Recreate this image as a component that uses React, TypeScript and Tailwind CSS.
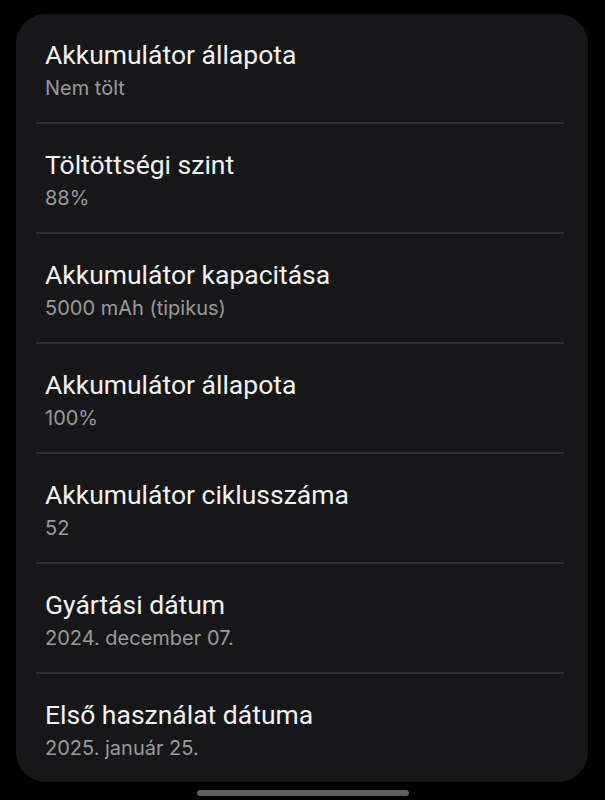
const rows = [
  { title: "Akkumulátor állapota", value: "Nem tölt" },
  { title: "Töltöttségi szint", value: "88%" },
  { title: "Akkumulátor kapacitása", value: "5000 mAh (tipikus)" },
  { title: "Akkumulátor állapota", value: "100%" },
  { title: "Akkumulátor ciklusszáma", value: "52" },
  { title: "Gyártási dátum", value: "2024. december 07." },
  { title: "Első használat dátuma", value: "2025. január 25." },
];

export default function App() {
  return (
    <div
      className="flex h-[800px] w-[605px] flex-col bg-black"
      style={{ fontFamily: "Roboto, 'Noto Sans', sans-serif" }}
    >
      <div className="mx-[16px] mt-[14px] w-[572px] rounded-[30px] bg-[#171719]">
        {rows.map((row, i) => (
          <div key={i}>
            {i > 0 && <div className="ml-[20px] mr-[24px] h-[2px] bg-[#303032]" />}
            <div className="h-[108px] pl-[29px] pt-[25px]">
              <div className="text-[26.5px] leading-[32px] text-[#f2f2f2]">{row.title}</div>
              <div className="mt-[5px] font-['Inter',sans-serif] text-[20px] leading-[24px] text-[#9a9a9c]">
                {row.value}
              </div>
            </div>
          </div>
        ))}
      </div>
      <div className="flex flex-1 items-center justify-center">
        <div className="mt-[3px] h-[6px] w-[212px] rounded-full bg-[#5e5e5e]" />
      </div>
    </div>
  );
}
